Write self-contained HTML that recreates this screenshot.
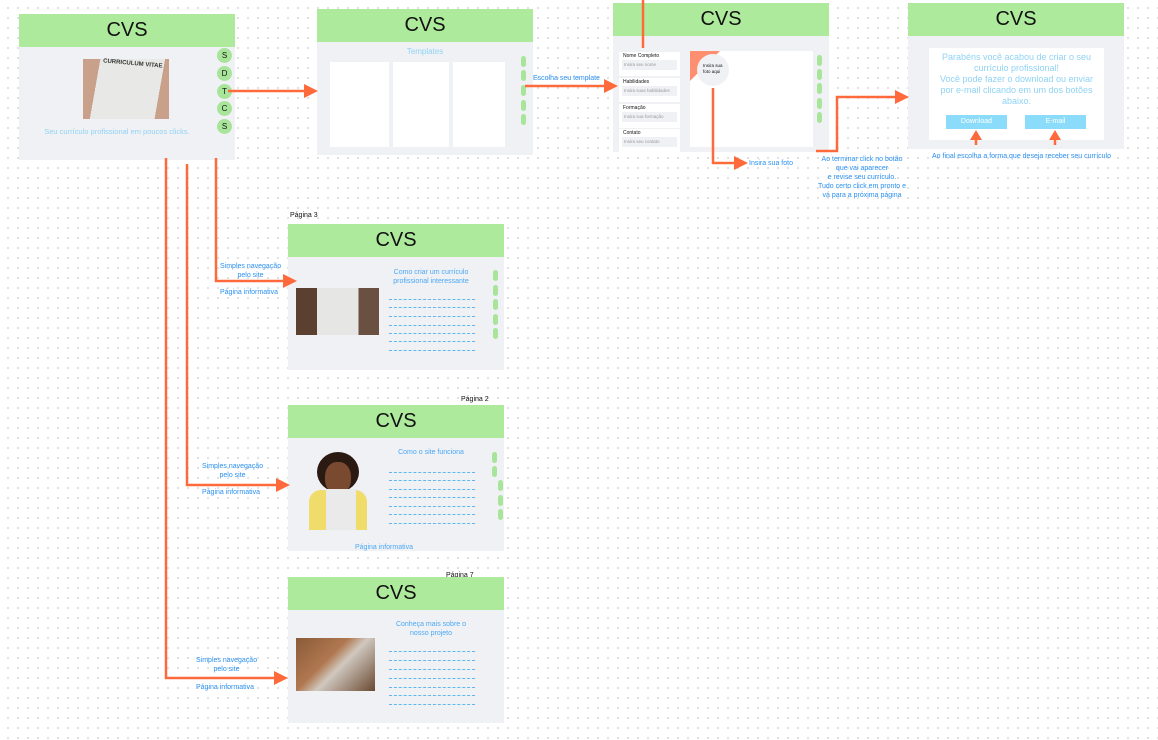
<!DOCTYPE html>
<html><head><meta charset="utf-8"><style>
*{margin:0;padding:0;box-sizing:border-box}
body{width:1158px;height:740px;overflow:hidden;position:relative;font-family:"Liberation Sans",sans-serif;background-color:#fff;background-image:radial-gradient(circle,#dcdcdc 0.9px,transparent 1.2px);background-size:10px 10px;background-position:3px 3px}
.f{position:absolute;width:216px;height:146px;background:#f0f1f5}
.h{height:33px;background:#aeea9c;text-align:center;font-size:20px;line-height:33px;color:#111}
.a{position:absolute}
.t{position:absolute;font-size:7px;color:#2a90f0;text-align:center;line-height:9px;white-space:nowrap}
.k{position:absolute;font-size:7px;color:#111;white-space:nowrap}
.w{position:absolute;background:#fff}
.pill{position:absolute;width:5px;height:11px;border-radius:3px;background:#a8e59a}
.dl{position:absolute;height:0;border-top:1px dashed #5ab8f5;width:86px}
.circ{position:absolute;width:15px;height:15px;border-radius:50%;background:#a8e59a;font-size:8px;text-align:center;line-height:15px;color:#111}
.fld{position:absolute;left:619px;width:61px;height:24px;background:#fff}
.fld b{display:block;font-size:5px;font-weight:normal;color:#111;padding:1px 4px}
.fld i{display:block;margin:0 3px;height:10px;background:#f0f1f5;font-style:normal;font-size:4.5px;color:#999;line-height:10px;padding-left:2px}
</style></head><body>

<div class="f" style="left:19px;top:14px;height:146px"><div class="h">CVS</div></div>
<div class="a" style="left:83px;top:59px;width:86px;height:60px;background:linear-gradient(100deg,#c9a08a 0 18%,#e8e8e6 18% 85%,#c9a08a 85%)"></div>
<div class="a" style="left:103px;top:61px;font-size:6px;font-weight:bold;color:#333;transform:rotate(5deg)">CURRICULUM VITAE</div>
<div class="t" style="left:19px;top:127px;width:196px;color:#8fd3f5;font-size:7.5px">Seu currículo profissional em poucos clicks.</div>
<div class="circ" style="left:217px;top:48px">S</div>
<div class="circ" style="left:217px;top:66px">D</div>
<div class="circ" style="left:217px;top:84px">T</div>
<div class="circ" style="left:217px;top:101px">C</div>
<div class="circ" style="left:217px;top:119px">S</div>

<div class="f" style="left:317px;top:9px"><div class="h">CVS</div></div>
<div class="t" style="left:317px;top:47px;width:216px;color:#8fd3f5;font-size:8px">Templates</div>
<div class="w" style="left:330px;top:62px;width:59px;height:85px"></div>
<div class="w" style="left:393px;top:62px;width:56px;height:85px"></div>
<div class="w" style="left:453px;top:62px;width:52px;height:85px"></div>
<div class="pill" style="left:521px;top:56px"></div><div class="pill" style="left:521px;top:70px"></div><div class="pill" style="left:521px;top:85px"></div><div class="pill" style="left:521px;top:100px"></div><div class="pill" style="left:521px;top:114px"></div>
<div class="t" style="left:533px;top:74px">Escolha seu template</div>

<div class="f" style="left:613px;top:3px;height:149px"><div class="h">CVS</div></div>
<div class="fld" style="top:52px"><b>Nome Completo</b><i>Insira seu nome</i></div>
<div class="fld" style="top:78px"><b>Habilidades</b><i>Insira suas habilidades</i></div>
<div class="fld" style="top:104px"><b>Formação</b><i>Insira sua formação</i></div>
<div class="fld" style="top:129px"><b>Contato</b><i>Insira seu contato</i></div>
<div class="w" style="left:690px;top:51px;width:123px;height:96px"></div>
<div class="a" style="left:690px;top:51px;width:0;height:0;border-top:30px solid #ff8f70;border-right:30px solid transparent"></div>
<div class="a" style="left:697px;top:54px;width:32px;height:32px;border-radius:50%;background:#f0f1f5"></div>
<div class="k" style="left:703px;top:63px;font-size:4.5px;line-height:6px">Insira sua<br>foto aqui</div>
<div class="pill" style="left:817px;top:55px"></div><div class="pill" style="left:817px;top:69px"></div><div class="pill" style="left:817px;top:83px"></div><div class="pill" style="left:817px;top:98px"></div><div class="pill" style="left:817px;top:112px"></div>
<div class="t" style="left:749px;top:159px">Insira sua foto</div>
<div class="t" style="left:807px;top:155px;width:110px">Ao terminar click no botão<br>que vai aparecer<br>e revise seu currículo.<br>Tudo certo click em pronto e<br>vá para a próxima página</div>

<div class="f" style="left:908px;top:3px;height:146px"><div class="h">CVS</div></div>
<div class="w" style="left:929px;top:48px;width:175px;height:92px"></div>
<div class="t" style="left:929px;top:52px;width:175px;font-size:9px;line-height:11px;color:#8fd3f5">Parabéns você acabou de criar o seu<br>currículo profissional!<br>Você pode fazer o download ou enviar<br>por e-mail clicando em um dos botões<br>abaixo.</div>
<div class="a" style="left:946px;top:115px;width:61px;height:14px;background:#8adcfa;color:#fff;font-size:7px;text-align:center;line-height:14px">Download</div>
<div class="a" style="left:1025px;top:115px;width:61px;height:14px;background:#8adcfa;color:#fff;font-size:7px;text-align:center;line-height:14px">E-mail</div>
<div class="t" style="left:932px;top:152px">Ao final escolha a forma que deseja receber seu currículo</div>

<div class="k" style="left:290px;top:212px">Página 3</div>
<div class="f" style="left:288px;top:224px"><div class="h">CVS</div></div>
<div class="t" style="left:380px;top:268px;width:102px;color:#4aa8f5">Como criar um currículo<br>profissional interessante</div>
<div class="a" style="left:296px;top:288px;width:83px;height:47px;background:linear-gradient(90deg,#5b4030 0 25%,#e6e6e4 25% 75%,#6a5040 75%)"></div>
<div class="dl" style="left:389px;top:299px"></div><div class="dl" style="left:389px;top:307px"></div><div class="dl" style="left:389px;top:316px"></div><div class="dl" style="left:389px;top:325px"></div><div class="dl" style="left:389px;top:333px"></div><div class="dl" style="left:389px;top:341px"></div><div class="dl" style="left:389px;top:350px"></div>
<div class="pill" style="left:493px;top:270px"></div><div class="pill" style="left:493px;top:285px"></div><div class="pill" style="left:493px;top:299px"></div><div class="pill" style="left:493px;top:314px"></div><div class="pill" style="left:493px;top:328px"></div>
<div class="t" style="left:220px;top:262px">Simples navegação<br>pelo site</div>
<div class="t" style="left:220px;top:288px">Página informativa</div>

<div class="k" style="left:461px;top:396px">Página 2</div>
<div class="f" style="left:288px;top:405px"><div class="h">CVS</div></div>
<div class="t" style="left:380px;top:448px;width:102px;color:#4aa8f5">Como o site funciona</div>
<div class="a" style="left:317px;top:452px;width:42px;height:40px;border-radius:50%;background:#2a1a12"></div>
<div class="a" style="left:325px;top:462px;width:26px;height:32px;border-radius:45%;background:#7a4a30"></div>
<div class="a" style="left:309px;top:490px;width:58px;height:40px;border-radius:12px 12px 0 0;background:#f0dc6a"></div>
<div class="a" style="left:326px;top:489px;width:30px;height:41px;background:#eaeaea"></div>
<div class="dl" style="left:389px;top:472px"></div><div class="dl" style="left:389px;top:480px"></div><div class="dl" style="left:389px;top:489px"></div><div class="dl" style="left:389px;top:497px"></div><div class="dl" style="left:389px;top:506px"></div><div class="dl" style="left:389px;top:514px"></div><div class="dl" style="left:389px;top:523px"></div>
<div class="pill" style="left:492px;top:452px"></div><div class="pill" style="left:492px;top:466px"></div><div class="pill" style="left:498px;top:480px"></div><div class="pill" style="left:498px;top:495px"></div><div class="pill" style="left:498px;top:509px"></div>
<div class="t" style="left:355px;top:543px;color:#4aa8f5">Página informativa</div>
<div class="t" style="left:202px;top:462px">Simples navegação<br>pelo site</div>
<div class="t" style="left:202px;top:488px">Página informativa</div>

<div class="k" style="left:446px;top:572px">Página 7</div>
<div class="f" style="left:288px;top:577px"><div class="h">CVS</div></div>
<div class="t" style="left:380px;top:620px;width:102px;color:#4aa8f5">Conheça mais sobre o<br>nosso projeto</div>
<div class="a" style="left:296px;top:638px;width:79px;height:53px;background:linear-gradient(135deg,#8a5a38,#b07850 40%,#d0c8c0 55%,#6a4a30)"></div>
<div class="dl" style="left:389px;top:651px"></div><div class="dl" style="left:389px;top:660px"></div><div class="dl" style="left:389px;top:669px"></div><div class="dl" style="left:389px;top:678px"></div><div class="dl" style="left:389px;top:687px"></div><div class="dl" style="left:389px;top:695px"></div><div class="dl" style="left:389px;top:704px"></div>
<div class="t" style="left:196px;top:656px">Simples navegação<br>pelo site</div>
<div class="t" style="left:196px;top:683px">Página informativa</div>

<svg class="a" style="left:0;top:0" width="1158" height="740">
<g stroke="#ff6a3d" stroke-width="2.5" fill="none">
<path d="M228 91H306"/>
<path d="M525 86H606"/>
<path d="M643 0V48"/>
<path d="M713 88V163H735"/>
<path d="M816 151H837V97H896"/>
<path d="M976 145V139"/><path d="M1055 145V139"/>
<path d="M216 158V281H283"/>
<path d="M187 164V485H278"/>
<path d="M166 158V678H278"/>
</g>
<g fill="#ff6a3d">
<path d="M318 91L304 84V98Z"/>
<path d="M618 86L604 79V93Z"/>
<path d="M748 163L734 156V170Z"/>
<path d="M909 97L895 90V104Z"/>
<path d="M976 130L970 140H982Z"/><path d="M1055 130L1049 140H1061Z"/>
<path d="M297 281L283 274V288Z"/>
<path d="M290 485L276 478V492Z"/>
<path d="M288 678L274 671V685Z"/>
</g>
</svg>
</body></html>
